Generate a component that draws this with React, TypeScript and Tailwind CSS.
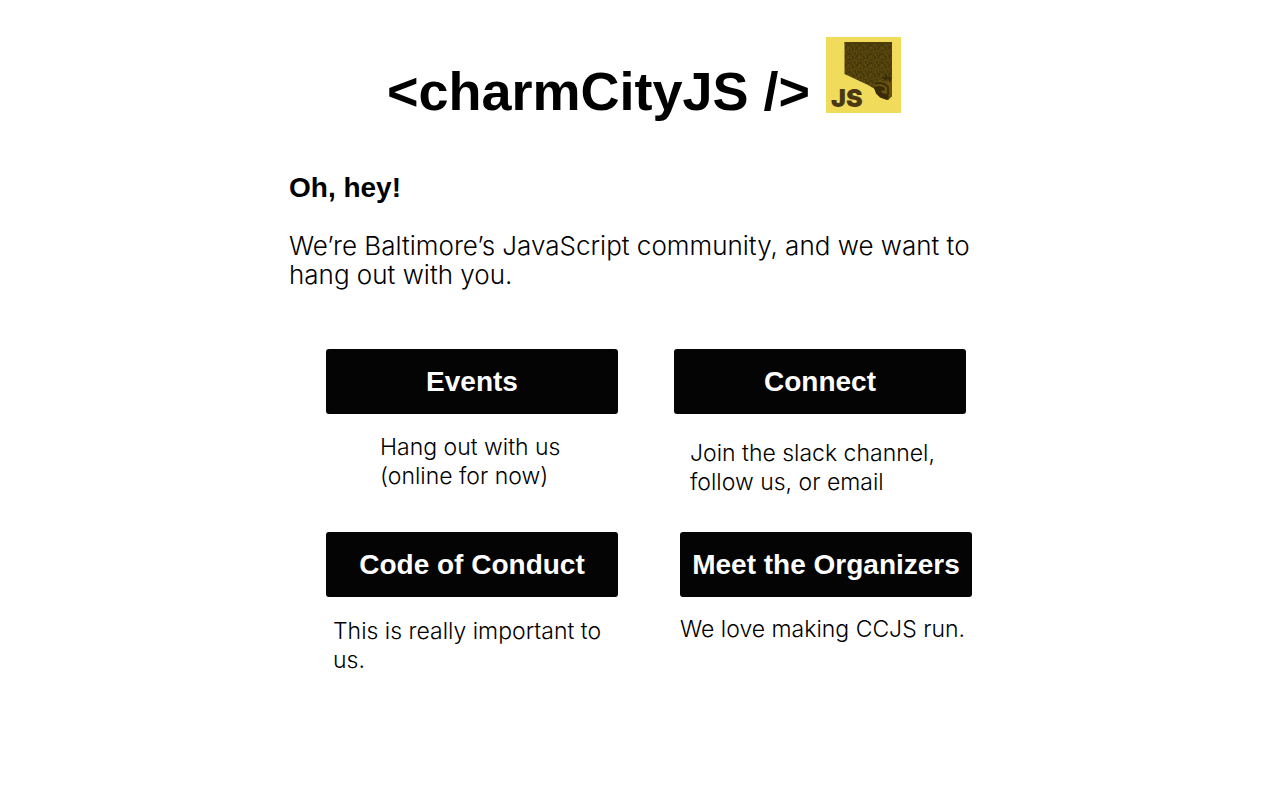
import React from "react";

function Logo() {
  return (
    <svg viewBox="0 0 75 76" className="h-[76px] w-[75px] shrink-0" role="img" aria-label="Charm City JS logo">
      <defs>
        <pattern id="streets" width="11" height="9" patternUnits="userSpaceOnUse">
          <rect width="11" height="9" fill="#4e3e0c" />
          <path d="M1 0v4M3 2v5M6 0v3M8 4v5M10 1v3M0 6h2M5 5h2M4 8h3" stroke="#65520f" strokeWidth="0.9" />
          <path d="M2 3v3M5 1v3M7 6v3M9 0v3M0 8h2" stroke="#3b2e09" strokeWidth="0.9" />
        </pattern>
      </defs>
      <rect width="75" height="76" fill="#f0db5b" />
      <path d="M18.5 5H66v54l-2 2-2 2-7-2.500-4.500-4-2.500-5-6-3.500-23.500-11z" fill="url(#streets)" />
      <path d="M18.500 5H66v2H18.500z" fill="#4a3a0c" opacity=".6" />
      <path d="M48 47l6-4 6 2 6-3v17l-4 4-7-3-5-5z" fill="#67520f" />
      <path d="M49 47c4-2 10-1 13 3v8M60 37v4h4v4M57 40l3 3" fill="none" stroke="#3b2b08" strokeWidth="1.800" />
      <path d="M48 50l5-1 5 1 1 3-4 1 1 2 5 1 2 3-2 3-7-2.500-4-4z" fill="#392a08" />
      <text
        x="5"
        y="69.500"
        fontFamily="Inter, sans-serif"
        fontWeight="900"
        fontSize="25"
        fill="#4a3815"
      >
        JS
      </text>
    </svg>
  );
}

function CardLink({ href, children }: { href: string; children: React.ReactNode }) {
  return (
    <a
      href={href}
      className="flex h-[65px] items-center justify-center rounded-[3px] bg-[#040404] font-['Liberation_Sans',Arial,sans-serif] text-[28px] leading-8 font-bold whitespace-nowrap text-white"
    >
      {children}
    </a>
  );
}

export default function App() {
  return (
    <main className="mx-auto max-w-[702px] bg-white pt-[37px] font-['Liberation_Sans',Arial,sans-serif] text-black">
      <header className="flex justify-center gap-4 pl-2">
        <h1 className="pt-[22px] text-[54px] leading-16 font-bold whitespace-nowrap">&lt;charmCityJS /&gt;</h1>
        <Logo />
      </header>

      <h2 className="mt-[49px] text-[28px] leading-8 font-bold">Oh, hey!</h2>
      <p className="mt-[27px] font-['Inter',sans-serif] text-[26px] leading-[29px] font-light">
        We’re Baltimore’s JavaScript community, and we want to hang out with you.
      </p>

      <nav className="mt-15 pl-[37px] font-['Inter',sans-serif] text-[23px] leading-[29px] font-light">
        <div className="flex gap-14">
          <section className="w-[292px]">
            <CardLink href="#events">Events</CardLink>
            <p className="mt-[19px] pl-[54px] whitespace-nowrap">Hang out with us<br />(online for now)</p>
          </section>
          <section className="w-[292px]">
            <CardLink href="#connect">Connect</CardLink>
            <p className="mt-[25px] pl-4 whitespace-nowrap">Join the slack channel,<br />follow us, or email</p>
          </section>
        </div>
        <div className="mt-[35px] flex gap-[62px]">
          <section className="w-[292px]">
            <CardLink href="#conduct">Code of Conduct</CardLink>
            <p className="mt-5 pl-[7px] whitespace-nowrap">This is really important to<br />us.</p>
          </section>
          <section className="w-[292px]">
            <CardLink href="#organizers">Meet the Organizers</CardLink>
            <p className="mt-[18px] whitespace-nowrap">We love making CCJS run.</p>
          </section>
        </div>
      </nav>
    </main>
  );
}
